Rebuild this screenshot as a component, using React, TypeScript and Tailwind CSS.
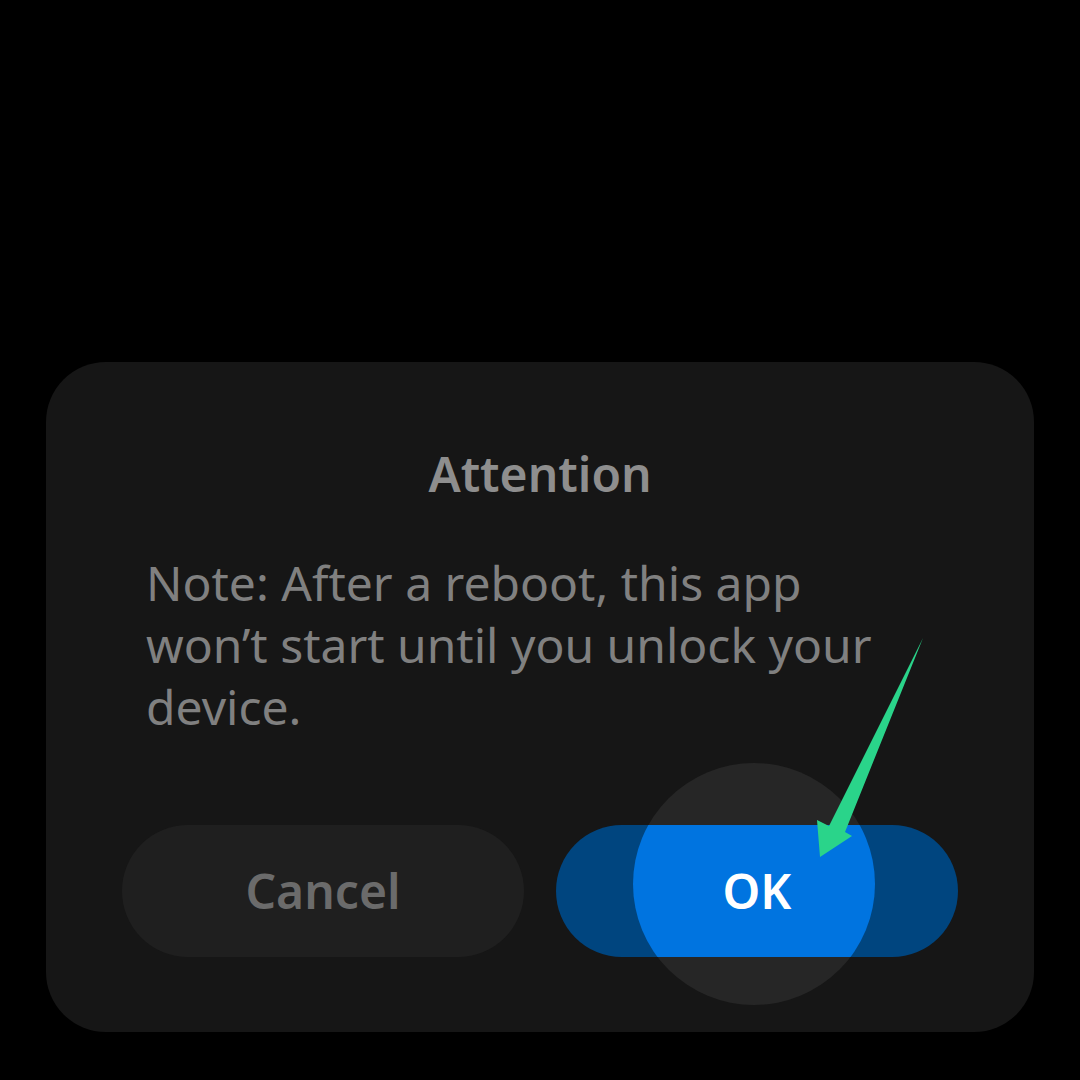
import React from 'react';

const font = { fontFamily: '"Noto Sans", Lato, sans-serif' };

const Arrow: React.FC = () => (
  <svg className="absolute left-0 top-0 pointer-events-none" width="1080" height="1080" viewBox="0 0 1080 1080">
    <polygon points="923,638 845,832 852,836 820,857 817,820 829,826" fill="#2ad48a" />
  </svg>
);

export default function App() {
  return (
    <div className="relative h-[1080px] w-[1080px] overflow-hidden bg-black flex flex-col justify-end px-[46px] pb-[48px]" style={font}>
      <div className="relative h-[670px] rounded-[60px] bg-[#161616] px-[76px] pt-[82px] pb-[75px] flex flex-col">
        <h1 className="text-center text-[48px] leading-[60px] font-semibold text-[#8e8e8e]">Attention</h1>
        <p className="mt-[48px] pl-[24px] pr-[58px] text-[48px] leading-[62px] text-[#808080]">
          Note: After a reboot, this app won’t start until you unlock your device.
        </p>
        <div className="mt-auto relative grid grid-cols-2 gap-[32px]">
          {/* touch ripple halo behind OK */}
          <div className="absolute left-[511px] top-[-62px] h-[242px] w-[242px] rounded-full bg-[#262626]" />
          <button className="relative h-[132px] rounded-full bg-[#1f1f1f] text-[48px] font-semibold text-[#6b6b6b]">
            Cancel
          </button>
          <button className="relative h-[132px] overflow-hidden rounded-full bg-[#00457f] text-[48px] font-semibold text-white">
            <span className="absolute left-[77px] top-[-62px] h-[242px] w-[242px] rounded-full bg-[#0074e0]" />
            <span className="relative">OK</span>
          </button>
        </div>
      </div>
      <Arrow />
    </div>
  );
}
